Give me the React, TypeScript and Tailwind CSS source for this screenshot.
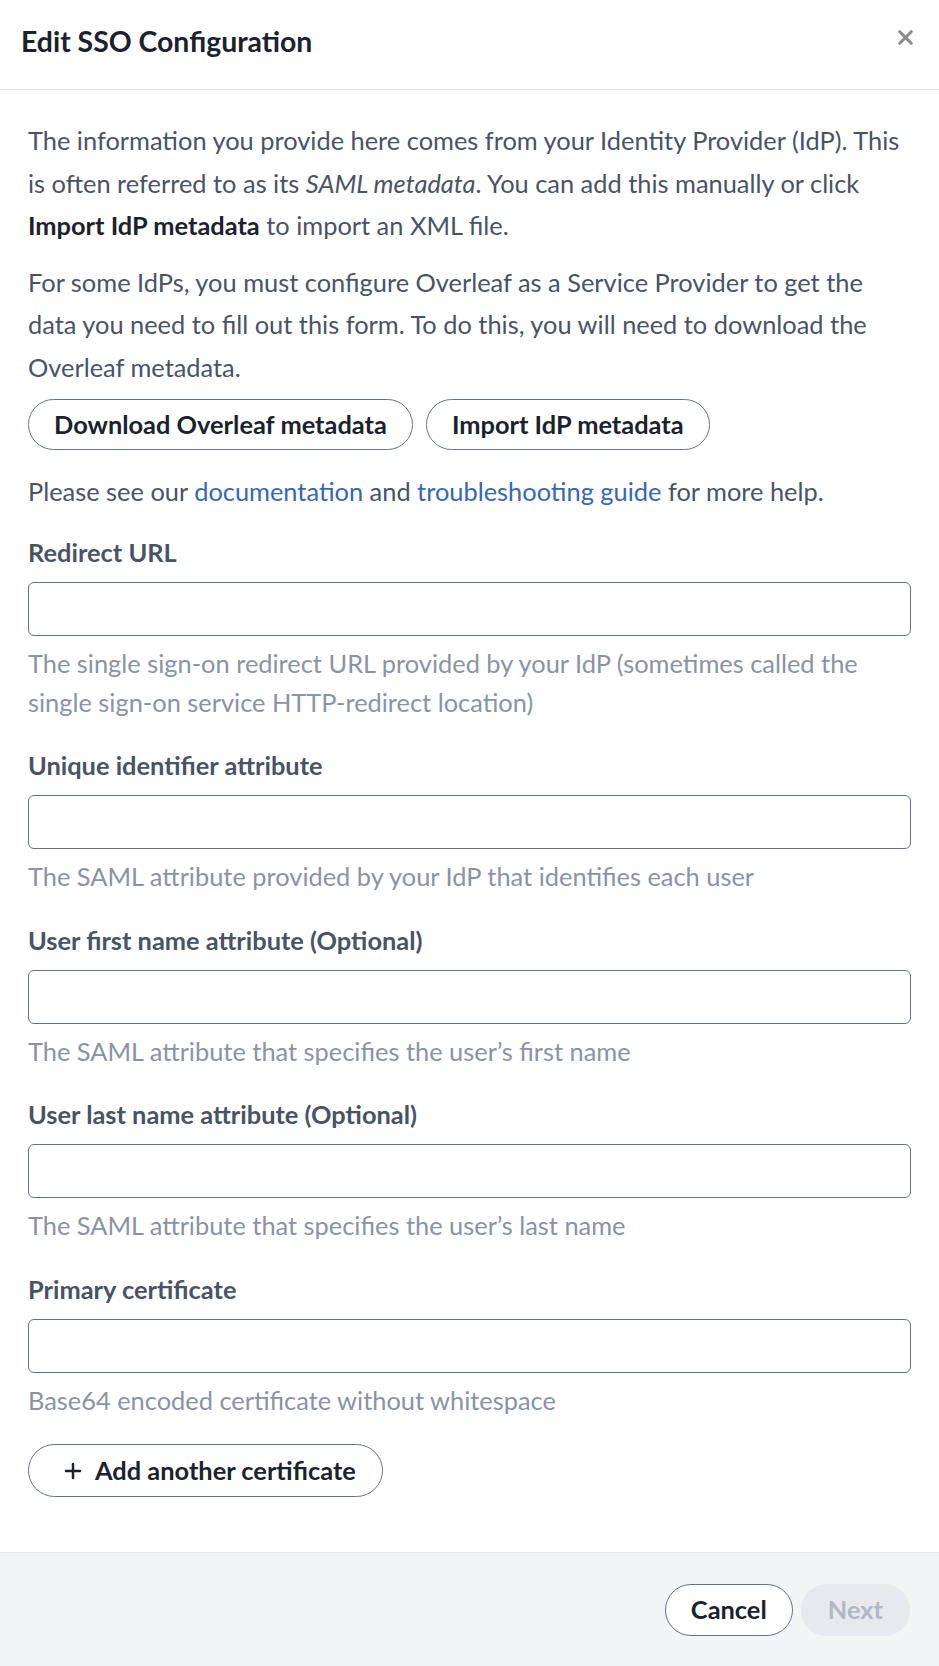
import { Plus, X } from 'lucide-react';

const fields = [
  {
    label: 'Redirect URL',
    help: 'The single sign-on redirect URL provided by your IdP (sometimes called the single sign-on service HTTP-redirect location)',
  },
  {
    label: 'Unique identifier attribute',
    help: 'The SAML attribute provided by your IdP that identifies each user',
  },
  {
    label: 'User first name attribute (Optional)',
    help: 'The SAML attribute that specifies the user\u2019s first name',
  },
  {
    label: 'User last name attribute (Optional)',
    help: 'The SAML attribute that specifies the user\u2019s last name',
  },
  {
    label: 'Primary certificate',
    help: 'Base64 encoded certificate without whitespace',
  },
];

function Field({ label, help }: { label: string; help: string }) {
  return (
    <div className="mb-[27.5px]">
      <label className="block text-[25.4px] font-bold leading-[32px] text-[#495365]">{label}</label>
      <input
        type="text"
        className="mt-[14px] block h-[54px] w-full rounded-[6px] border border-[#677283] bg-white px-4 outline-none"
      />
      <p className="mt-[8px] text-[25.4px] leading-[39px] text-[#8a93a5]">{help}</p>
    </div>
  );
}

export default function App() {
  return (
    <div className="min-h-[1666px] w-[939px] bg-white font-['Lato',sans-serif] flex flex-col">
      {/* Header */}
      <div className="flex h-[90px] items-start justify-between border-b border-[#e0e3e8] pl-[21px] pr-[22px]">
        <h2 className="mt-[21px] text-[28.4px] font-bold leading-[40px] text-[#1b222c]">Edit SSO Configuration</h2>
        <X className="mt-[26px] h-[23px] w-[23px] text-[#8b8b8b]" strokeWidth={3.2} />
      </div>

      {/* Body */}
      <div className="flex-1 px-[28px] pt-[29px] pb-[40px] text-[25.4px] leading-[42.5px] text-[#495365]">
        <p className="mb-[14px]">
          The information you provide here comes from your Identity Provider (IdP). This is often referred to as
          its <em>SAML metadata</em>. You can add this manually or click <strong className="font-bold text-[#1b222c]">Import IdP metadata</strong> to
          import an XML file.
        </p>
        <p className="mb-[11px]">
          For some IdPs, you must configure Overleaf as a Service Provider to get the data you need to fill out this
          form. To do this, you will need to download the Overleaf metadata.
        </p>

        <div className="flex gap-[13px]">
          <button className="h-[51px] rounded-full border border-[#677283] px-[25px] text-[25.4px] font-bold text-[#1b222c]">
            Download Overleaf metadata
          </button>
          <button className="h-[51px] rounded-full border border-[#677283] px-[25px] text-[25.4px] font-bold text-[#1b222c]">
            Import IdP metadata
          </button>
        </div>

        <p className="mt-[20px] mb-[23px]">
          Please see our <a className="text-[#3467b8]">documentation</a> and{' '}
          <a className="text-[#3467b8]">troubleshooting guide</a> for more help.
        </p>

        {fields.map((f) => (
          <Field key={f.label} label={f.label} help={f.help} />
        ))}

        <button className="-mt-[3px] flex h-[53px] items-center gap-[10px] rounded-full border border-[#677283] pl-[32px] pr-[26px] text-[25.4px] font-bold text-[#1b222c]">
          <Plus className="h-[24px] w-[24px]" strokeWidth={2.5} />
          Add another certificate
        </button>
      </div>

      {/* Footer */}
      <div className="flex h-[114px] items-center justify-end gap-[8px] border-t border-[#e0e3e8] bg-[#f3f4f6] px-[29px]">
        <button className="h-[52px] rounded-full border border-[#677283] bg-white px-[25px] text-[25.4px] font-bold text-[#1b222c]">
          Cancel
        </button>
        <button className="h-[52px] rounded-full bg-[#e7e9ee] px-[27px] text-[25.4px] font-bold text-[#b2b8c2]">
          Next
        </button>
      </div>
    </div>
  );
}
